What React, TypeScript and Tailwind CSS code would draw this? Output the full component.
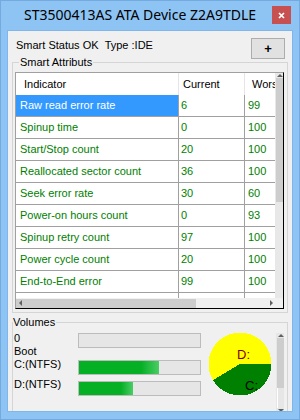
import React from "react";

const ROWS = [
  { name: "Raw read error rate", cur: "6", worst: "99" },
  { name: "Spinup time", cur: "0", worst: "100" },
  { name: "Start/Stop count", cur: "20", worst: "100" },
  { name: "Reallocated sector count", cur: "36", worst: "100" },
  { name: "Seek error rate", cur: "30", worst: "60" },
  { name: "Power-on hours count", cur: "0", worst: "93" },
  { name: "Spinup retry count", cur: "97", worst: "100" },
  { name: "Power cycle count", cur: "20", worst: "100" },
  { name: "End-to-End error", cur: "99", worst: "100" },
  { name: "Airflow Temperature", cur: "45", worst: "52" },
];

const VOLUMES = [
  { label: ["0", "Boot"], used: 0, rowClass: "h-[26px]", barClass: "mt-[1px]" },
  { label: ["C:(NTFS)"], used: 66, rowClass: "h-[20px]", barClass: "mt-[2px]" },
  { label: ["D:(NTFS)"], used: 45, rowClass: "h-[20px]", barClass: "mt-[3px]" },
];

function Arrow({ dir }: { dir: "up" | "down" | "left" | "right" }) {
  const pts = {
    up: "0,4 3,1 6,4",
    down: "0,1 3,4 6,1",
    left: "4,0 1,3 4,6",
    right: "1,0 4,3 1,6",
  }[dir];
  const wide = dir === "up" || dir === "down";
  return (
    <svg width={wide ? 6 : 5} height={wide ? 5 : 6} viewBox={wide ? "0 0 6 5" : "0 0 5 6"}>
      <polygon points={pts} fill="#606060" />
    </svg>
  );
}

function SmartTable() {
  return (
    <div className="ml-[2px] mt-[9px] w-[269px] h-[237px] flex flex-col border border-t-[#a0a0a0] border-l-[#a0a0a0] border-r-black border-b-black bg-white">
      <div className="flex h-[225px]">
        <div className="w-[259px] h-[225px] overflow-hidden">
          {/* header */}
          <div className="flex h-[22px] leading-[22px] bg-white text-black whitespace-nowrap">
            <div className="w-[163px] shrink-0 pl-[8px] border-r border-[#e5e5e5]">Indicator</div>
            <div className="w-[66px] shrink-0 pl-[4px] border-r border-[#e5e5e5]">Current</div>
            <div className="w-[70px] shrink-0 pl-[7px]">Worst</div>
          </div>
          {ROWS.map((r, i) => (
            <div key={r.name} className="flex h-[22px] leading-[21px] border-b border-[#a0a0a0] text-[#008000] whitespace-nowrap">
              <div className={`w-[163px] shrink-0 pl-[4px] border-r border-[#a0a0a0] ${i === 0 ? "bg-[#3399ff] text-white" : ""}`}>
                {r.name}
              </div>
              <div className="w-[66px] shrink-0 pl-[2px] border-r border-[#a0a0a0]">{r.cur}</div>
              <div className="w-[70px] shrink-0 pl-[3px]">{r.worst}</div>
            </div>
          ))}
        </div>
        {/* vertical scrollbar */}
        <div className="w-[8px] h-[225px] bg-[#e8e8e8] flex flex-col items-center">
          <div className="h-[5px] flex items-start justify-end w-full">
            <Arrow dir="up" />
          </div>
          <div className="w-[7px] h-[124px] bg-[#cdcdcd]" />
        </div>
      </div>
      {/* horizontal scrollbar */}
      <div className="flex h-[10px]">
        <div className="w-[259px] bg-[#f0f0f0] flex items-center">
          <div className="w-[180px] h-[9px] bg-[#cdcdcd] flex items-center pl-[2px]">
            <Arrow dir="left" />
          </div>
          <div className="flex-1" />
          <div className="pr-[1px]">
            <Arrow dir="right" />
          </div>
        </div>
        <div className="w-[8px] bg-[#f0f0f0]" />
      </div>
    </div>
  );
}

function Pie() {
  return (
    <svg width="64" height="64" viewBox="0 0 64 64" shapeRendering="crispEdges">
      <circle cx="32" cy="32" r="31.5" fill="#ffff00" />
      <path d="M32 32 L63.5 32 A31.5 31.5 0 0 1 5 48.2 Z" fill="#008000" />
      <text x="29" y="27" fontSize="13" fill="#800000" fontFamily="Liberation Sans, Arial, sans-serif">D:</text>
      <text x="37" y="57.5" fontSize="13" fill="#000" fontFamily="Liberation Sans, Arial, sans-serif">C:</text>
    </svg>
  );
}

export default function App() {
  return (
    <div className="w-[300px] h-[420px] bg-[#8ec4f4] border border-[#74aae0] flex flex-col overflow-hidden font-['Liberation_Sans',Arial,sans-serif] text-[11px] leading-[13px] text-black">
      {/* title bar */}
      <div className="h-[29px] flex items-start shrink-0">
        <div className="flex-1 pl-[7px] pt-[4px] text-center font-['Noto_Sans',sans-serif] text-[14px] leading-[20px] text-black whitespace-nowrap">
          ST3500413AS ATA Device Z2A9TDLE
        </div>
        <div className="mt-[5px] mr-[8px] w-[19px] h-[18px] bg-[#c75050] flex items-center justify-center">
          <svg width="7" height="7" viewBox="0 0 7 7">
            <path d="M1 1 L6 6 M6 1 L1 6" stroke="#fff" strokeWidth="1.7" />
          </svg>
        </div>
      </div>

      {/* client area */}
      <div className="mx-[6px] border border-[#80b6ec] h-[382px] shrink-0">
        <div className="h-[380px] bg-[#f0f0f0] flex flex-col overflow-hidden">
          <div className="flex justify-between items-start pt-[7px] pl-[8px] pr-[7px]">
            <div className="mt-[1px] whitespace-nowrap">Smart Status OK&nbsp;&nbsp;Type :IDE</div>
            <div className="w-[34px] h-[21px] border border-[#adadad] bg-[#e1e1e1] flex items-center justify-center text-[13px] font-bold leading-none">
              +
            </div>
          </div>

          {/* Smart Attributs group */}
          <div className="relative mt-[3px] ml-[4px] w-[276px] h-[251px] shrink-0 border border-[#d5d5d5]">
            <span className="absolute left-[6px] top-[-7px] px-[1px] bg-[#f0f0f0] whitespace-nowrap">Smart Attributs</span>
            <SmartTable />
          </div>

          {/* Volumes group */}
          <div className="relative mt-[9px] ml-[4px] w-[276px] flex-1 border-l border-t border-r border-[#d5d5d5]">
            <span className="absolute left-0 top-[-7px] pr-[1px] bg-[#f0f0f0] whitespace-nowrap">Volumes</span>
            <div className="flex pt-[9px] pl-[1px]">
              <div className="flex flex-col">
                {VOLUMES.map((v) => (
                  <div key={v.label.join()} className={`flex ${v.rowClass}`}>
                    <div className="w-[64px] text-[11px]">
                      {v.label.map((l) => (
                        <div key={l}>{l}</div>
                      ))}
                    </div>
                    <div className={`w-[123px] h-[15px] border border-[#bcbcbc] bg-[#e6e6e6] ${v.barClass}`}>
                      <div
                        className="h-full bg-[linear-gradient(to_right,#06b025_78%,#4acd66)]"
                        style={{ width: `${v.used}%` }}
                      />
                    </div>
                  </div>
                ))}
              </div>
              <div className="ml-[7px]">
                <Pie />
              </div>
              <div className="ml-[4px] mt-[1px] w-[8px] h-[80px] bg-[#e6e6e6] flex flex-col items-center">
                <div className="h-[5px] w-full flex justify-end">
                  <Arrow dir="up" />
                </div>
                <div className="w-[7px] h-[50px] bg-[#cdcdcd]" />
                <div className="flex-1 w-[1px] bg-white self-start ml-[1px]" />
                <div className="h-[5px] w-full flex justify-end">
                  <Arrow dir="down" />
                </div>
              </div>
            </div>
          </div>
        </div>
      </div>
      <div className="flex-1" />
    </div>
  );
}
